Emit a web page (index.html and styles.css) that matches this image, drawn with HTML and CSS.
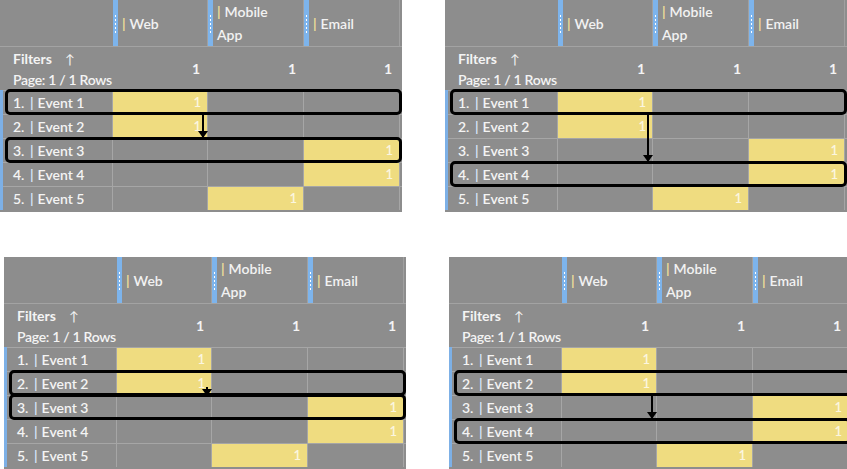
FILE: index.html
```html
<!DOCTYPE html>
<html>
<head>
<meta charset="utf-8">
<link rel="stylesheet" href="styles.css">
</head>
<body>
<div class="sheet">

  <div class="panel p-tl">
    <div class="hdr">
      <div class="corner"></div>
      <div class="hcol"><span class="grip"></span><span class="htext"><span class="tick">|</span>Web</span></div>
      <div class="hcol"><span class="grip"></span><span class="htext two"><span class="tick">|</span>Mobile<br>App</span></div>
      <div class="hcol"><span class="grip"></span><span class="htext"><span class="tick">|</span>Email</span></div>
    </div>
    <div class="filters">
      <div class="flabel"><div class="ftitle">Filters <span class="up">↑</span></div><div class="page">Page: 1 / 1 Rows</div></div>
      <div class="tot">1</div><div class="tot">1</div><div class="tot">1</div>
    </div>
    <div class="rows">
      <div class="row"><div class="lab"><span class="num">1.</span><span class="rtick">|</span>Event 1</div><div class="cell on">1</div><div class="cell"></div><div class="cell"></div></div>
      <div class="row"><div class="lab"><span class="num">2.</span><span class="rtick">|</span>Event 2</div><div class="cell on">1</div><div class="cell"></div><div class="cell"></div></div>
      <div class="row"><div class="lab"><span class="num">3.</span><span class="rtick">|</span>Event 3</div><div class="cell"></div><div class="cell"></div><div class="cell on">1</div></div>
      <div class="row"><div class="lab"><span class="num">4.</span><span class="rtick">|</span>Event 4</div><div class="cell"></div><div class="cell"></div><div class="cell on">1</div></div>
      <div class="row"><div class="lab"><span class="num">5.</span><span class="rtick">|</span>Event 5</div><div class="cell"></div><div class="cell on">1</div><div class="cell"></div></div>
    </div>
    <div class="box r1"></div>
    <div class="box r3"></div>
    <div class="arrow a13"></div>
  </div>

  <div class="panel p-tr">
    <div class="hdr">
      <div class="corner"></div>
      <div class="hcol"><span class="grip"></span><span class="htext"><span class="tick">|</span>Web</span></div>
      <div class="hcol"><span class="grip"></span><span class="htext two"><span class="tick">|</span>Mobile<br>App</span></div>
      <div class="hcol"><span class="grip"></span><span class="htext"><span class="tick">|</span>Email</span></div>
    </div>
    <div class="filters">
      <div class="flabel"><div class="ftitle">Filters <span class="up">↑</span></div><div class="page">Page: 1 / 1 Rows</div></div>
      <div class="tot">1</div><div class="tot">1</div><div class="tot">1</div>
    </div>
    <div class="rows">
      <div class="row"><div class="lab"><span class="num">1.</span><span class="rtick">|</span>Event 1</div><div class="cell on">1</div><div class="cell"></div><div class="cell"></div></div>
      <div class="row"><div class="lab"><span class="num">2.</span><span class="rtick">|</span>Event 2</div><div class="cell on">1</div><div class="cell"></div><div class="cell"></div></div>
      <div class="row"><div class="lab"><span class="num">3.</span><span class="rtick">|</span>Event 3</div><div class="cell"></div><div class="cell"></div><div class="cell on">1</div></div>
      <div class="row"><div class="lab"><span class="num">4.</span><span class="rtick">|</span>Event 4</div><div class="cell"></div><div class="cell"></div><div class="cell on">1</div></div>
      <div class="row"><div class="lab"><span class="num">5.</span><span class="rtick">|</span>Event 5</div><div class="cell"></div><div class="cell on">1</div><div class="cell"></div></div>
    </div>
    <div class="box r1"></div>
    <div class="box r4"></div>
    <div class="arrow a14"></div>
  </div>

  <div class="panel p-bl">
    <div class="hdr">
      <div class="corner"></div>
      <div class="hcol"><span class="grip"></span><span class="htext"><span class="tick">|</span>Web</span></div>
      <div class="hcol"><span class="grip"></span><span class="htext two"><span class="tick">|</span>Mobile<br>App</span></div>
      <div class="hcol"><span class="grip"></span><span class="htext"><span class="tick">|</span>Email</span></div>
    </div>
    <div class="filters">
      <div class="flabel"><div class="ftitle">Filters <span class="up">↑</span></div><div class="page">Page: 1 / 1 Rows</div></div>
      <div class="tot">1</div><div class="tot">1</div><div class="tot">1</div>
    </div>
    <div class="rows">
      <div class="row"><div class="lab"><span class="num">1.</span><span class="rtick">|</span>Event 1</div><div class="cell on">1</div><div class="cell"></div><div class="cell"></div></div>
      <div class="row"><div class="lab"><span class="num">2.</span><span class="rtick">|</span>Event 2</div><div class="cell on">1</div><div class="cell"></div><div class="cell"></div></div>
      <div class="row"><div class="lab"><span class="num">3.</span><span class="rtick">|</span>Event 3</div><div class="cell"></div><div class="cell"></div><div class="cell on">1</div></div>
      <div class="row"><div class="lab"><span class="num">4.</span><span class="rtick">|</span>Event 4</div><div class="cell"></div><div class="cell"></div><div class="cell on">1</div></div>
      <div class="row"><div class="lab"><span class="num">5.</span><span class="rtick">|</span>Event 5</div><div class="cell"></div><div class="cell on">1</div><div class="cell"></div></div>
    </div>
    <div class="box r2"></div>
    <div class="box r3"></div>
    <div class="arrow a23"></div>
  </div>

  <div class="panel p-br">
    <div class="hdr">
      <div class="corner"></div>
      <div class="hcol"><span class="grip"></span><span class="htext"><span class="tick">|</span>Web</span></div>
      <div class="hcol"><span class="grip"></span><span class="htext two"><span class="tick">|</span>Mobile<br>App</span></div>
      <div class="hcol"><span class="grip"></span><span class="htext"><span class="tick">|</span>Email</span></div>
    </div>
    <div class="filters">
      <div class="flabel"><div class="ftitle">Filters <span class="up">↑</span></div><div class="page">Page: 1 / 1 Rows</div></div>
      <div class="tot">1</div><div class="tot">1</div><div class="tot">1</div>
    </div>
    <div class="rows">
      <div class="row"><div class="lab"><span class="num">1.</span><span class="rtick">|</span>Event 1</div><div class="cell on">1</div><div class="cell"></div><div class="cell"></div></div>
      <div class="row"><div class="lab"><span class="num">2.</span><span class="rtick">|</span>Event 2</div><div class="cell on">1</div><div class="cell"></div><div class="cell"></div></div>
      <div class="row"><div class="lab"><span class="num">3.</span><span class="rtick">|</span>Event 3</div><div class="cell"></div><div class="cell"></div><div class="cell on">1</div></div>
      <div class="row"><div class="lab"><span class="num">4.</span><span class="rtick">|</span>Event 4</div><div class="cell"></div><div class="cell"></div><div class="cell on">1</div></div>
      <div class="row"><div class="lab"><span class="num">5.</span><span class="rtick">|</span>Event 5</div><div class="cell"></div><div class="cell on">1</div><div class="cell"></div></div>
    </div>
    <div class="box r2"></div>
    <div class="box r4"></div>
    <div class="arrow a24"></div>
  </div>

</div>
</body>
</html>
```

FILE: styles.css
```css
* { box-sizing: border-box; }
html, body { margin: 0; padding: 0; background: #ffffff; }
body {
  width: 847px;
  height: 469px;
  overflow: hidden;
  font-family: Lato, "Open Sans", sans-serif;
  font-weight: 600;
  color: #f4f4f4;
}
.sheet {
  display: grid;
  grid-template-columns: 402px 402px;
  grid-template-rows: 212px 212px;
  column-gap: 43px;
  row-gap: 45px;
}
.panel {
  position: relative;
  width: 402px;
  height: 212px;
  background: #8d8d8d;
  overflow: hidden;
}
.p-bl, .p-br { margin-left: 4px; }

.hdr {
  display: grid;
  grid-template-columns: 113px 95px 96px 96px;
  height: 47px;
  border-bottom: 1px solid #a3a3a3;
}
.hcol {
  display: flex;
  align-items: center;
  border-right: 1px solid #a0a0a0;
}
.grip {
  align-self: stretch;
  width: 5px;
  flex: none;
  background:
    repeating-linear-gradient(to bottom, #ffffff 0 2px, transparent 2px 4px) 2px 15px / 1px 18px no-repeat,
    #7db4ec;
}
.htext {
  padding-left: 4px;
  font-size: 14px;
  line-height: 23px;
  color: #f2f2f2;
  white-space: nowrap;
}
.tick { color: #f4e49a; margin-right: 4px; }

.filters {
  display: grid;
  grid-template-columns: 113px 95px 96px 96px;
  height: 43px;
}
.flabel { padding: 3px 0 0 13px; white-space: nowrap; }
.ftitle { font-size: 14px; font-weight: 700; line-height: 18px; }
.up { font-weight: 400; margin-left: 10px; font-size: 13px; }
.page { font-size: 14px; line-height: 20px; margin-top: 2px; letter-spacing: -0.3px; }
.tot {
  font-size: 14px;
  font-weight: 700;
  text-align: right;
  padding: 13px 8px 0 0;
}

.rows { border-left: 3px solid #7db0e6; }
.row {
  display: grid;
  grid-template-columns: 110px 95px 96px 96px;
  height: 24px;
  border-top: 1px solid #a6a6a6;
}
.lab {
  display: flex;
  align-items: center;
  padding-left: 10px;
  font-size: 14px;
  border-right: 1px solid #a6a6a6;
  white-space: nowrap;
}
.num { width: 17px; }
.rtick { color: #dbe9ff; margin-right: 4px; }
.cell {
  border-right: 1px solid #a6a6a6;
  text-align: right;
  font-size: 13px;
  line-height: 23px;
  padding-right: 6px;
  color: #fbf6e0;
}
.cell.on { background: #efdc80; }

.box {
  position: absolute;
  left: 5px;
  width: 397px;
  height: 26px;
  border: 3px solid #000;
  border-radius: 5px;
}
.r1 { top: 89px; }
.r2 { top: 113px; }
.r3 { top: 137px; }
.r4 { top: 161px; }

.arrow {
  position: absolute;
  left: 202px;
  width: 2px;
  background: #000;
}
.arrow::after {
  content: "";
  position: absolute;
  left: -4px;
  bottom: 0;
  border-left: 5px solid transparent;
  border-right: 5px solid transparent;
  border-top: 7px solid #000;
}
.a13 { top: 115px; height: 23px; }
.a14 { top: 115px; height: 47px; }
.a23 { top: 130px; height: 9px; }
.a24 { top: 139px; height: 23px; }
```
